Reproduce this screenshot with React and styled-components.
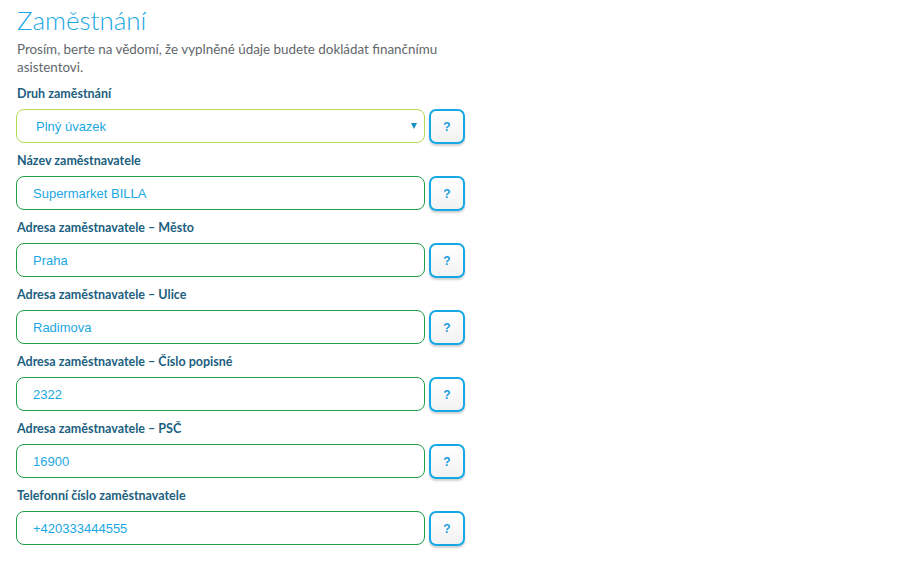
import React from "react";
import styled, { createGlobalStyle } from "styled-components";

const GlobalStyle = createGlobalStyle`
    html, body {
        margin: 0;
        padding: 0;
        background: #ffffff;
    }
    body {
        font-family: Lato, "Open Sans", sans-serif;
    }
`;

const Page = styled.div`
    width: 449px;
    padding: 4px 0 0 16px;
`;

const Title = styled.h1`
    margin: 0 0 4px 1px;
    font-family: Lato, sans-serif;
    font-weight: 300;
    font-size: 26px;
    line-height: 32px;
    color: #1ba7e1;
`;

const Note = styled.p`
    margin: 0 0 10px 1px;
    font-size: 13.4px;
    line-height: 18px;
    color: #62676b;
`;

const Group = styled.div`
    margin-bottom: 9px;
`;

const Label = styled.div`
    margin: 0 0 7px 1px;
    font-size: 12.5px;
    font-weight: 700;
    line-height: 16px;
    color: #1c5f7f;
`;

const Row = styled.div`
    display: flex;
    gap: 4px;
    align-items: flex-start;
`;

const Field = styled.div`
    position: relative;
    flex: 1;
    height: 34px;
    box-sizing: border-box;
    border: 1px solid ${(props) => (props.select ? "#b6dc52" : "#1f9e48")};
    border-radius: 8px;
    display: flex;
    align-items: center;
    padding-left: ${(props) => (props.select ? "19px" : "16px")};
    font-family: "Liberation Sans", Arial, sans-serif;
    font-size: 13px;
    color: #1ba7e1;
`;

const Caret = styled.span`
    position: absolute;
    right: 7px;
    top: 13px;
    width: 0;
    height: 0;
    border-left: 3px solid transparent;
    border-right: 3px solid transparent;
    border-top: 6px solid #1a8fc4;
`;

const Help = styled.button`
    width: 36px;
    height: 35px;
    box-sizing: border-box;
    border: 2px solid #15a8e4;
    border-radius: 7px;
    background: linear-gradient(#ffffff, #f2f2f2);
    box-shadow: 0 2px 2px rgba(0, 0, 0, 0.18);
    font-family: "Liberation Sans", Arial, sans-serif;
    font-weight: 700;
    font-size: 12px;
    color: #1a9ae0;
    padding: 0;
    cursor: pointer;
`;

const fields = [
    { label: "Druh zaměstnání", value: "Plný úvazek", select: true },
    { label: "Název zaměstnavatele", value: "Supermarket BILLA" },
    { label: "Adresa zaměstnavatele – Město", value: "Praha" },
    { label: "Adresa zaměstnavatele – Ulice", value: "Radimova" },
    { label: "Adresa zaměstnavatele – Číslo popisné", value: "2322" },
    { label: "Adresa zaměstnavatele – PSČ", value: "16900" },
    { label: "Telefonní číslo zaměstnavatele", value: "+420333444555" },
];

const App = () => {
    return (
        <Page>
            <GlobalStyle />
            <Title>Zaměstnání</Title>
            <Note>
                Prosím, berte na vědomí, že vyplněné údaje budete dokládat finančnímu
                asistentovi.
            </Note>
            {fields.map((f) => (
                <Group key={f.label}>
                    <Label>{f.label}</Label>
                    <Row>
                        <Field select={f.select}>
                            {f.value}
                            {f.select && <Caret />}
                        </Field>
                        <Help>?</Help>
                    </Row>
                </Group>
            ))}
        </Page>
    );
};

export default App;
